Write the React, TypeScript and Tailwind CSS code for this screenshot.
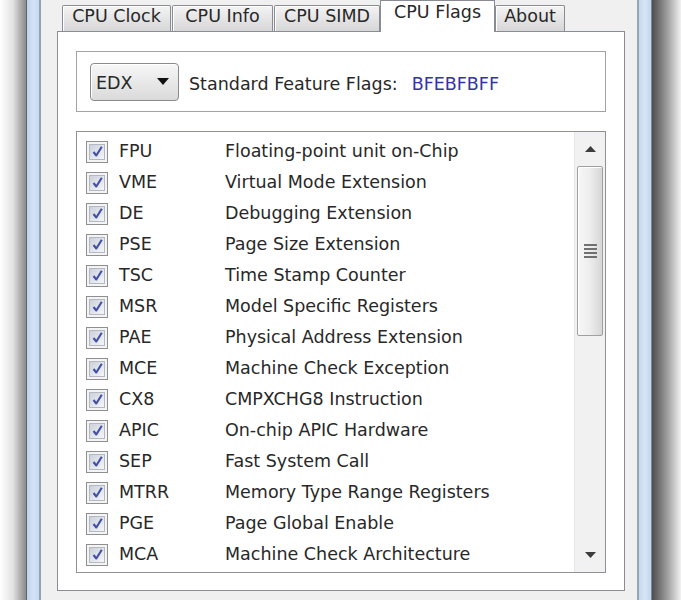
import { useState } from "react";

const flags = [
  { id: "FPU", desc: "Floating-point unit on-Chip" },
  { id: "VME", desc: "Virtual Mode Extension" },
  { id: "DE", desc: "Debugging Extension" },
  { id: "PSE", desc: "Page Size Extension" },
  { id: "TSC", desc: "Time Stamp Counter" },
  { id: "MSR", desc: "Model Specific Registers" },
  { id: "PAE", desc: "Physical Address Extension" },
  { id: "MCE", desc: "Machine Check Exception" },
  { id: "CX8", desc: "CMPXCHG8 Instruction" },
  { id: "APIC", desc: "On-chip APIC Hardware" },
  { id: "SEP", desc: "Fast System Call" },
  { id: "MTRR", desc: "Memory Type Range Registers" },
  { id: "PGE", desc: "Page Global Enable" },
  { id: "MCA", desc: "Machine Check Architecture" },
];

const tabs = [
  { id: "clock", label: "CPU Clock", w: "w-[109px]" },
  { id: "info", label: "CPU Info", w: "w-[101px] ml-[1px]" },
  { id: "simd", label: "CPU SIMD", w: "w-[106px] ml-[1px]" },
  { id: "flags", label: "CPU Flags", w: "w-[115px]" },
  { id: "about", label: "About", w: "w-[70px]" },
];

function CheckBox() {
  return (
    <div className="h-[22px] w-[22px] shrink-0 border border-[#8f8f8f] bg-[#f4f4f4] p-[2px]">
      <div className="flex h-full w-full items-center justify-center border border-[#b3b8c2] bg-gradient-to-br from-[#cdd1da] to-[#f5f6f9]">
        <svg width="13" height="13" viewBox="0 0 13 13">
          <path
            d="M2.5 7 L5.3 10.5 L10.8 1.8"
            fill="none"
            stroke="#3f50a6"
            strokeWidth="2.1"
            strokeLinejoin="round"
          />
        </svg>
      </div>
    </div>
  );
}

function ScrollBar() {
  return (
    <div className="flex w-[31px] shrink-0 flex-col border-l border-[#e8e8e8] bg-[#f1f1f1]">
      <div className="flex h-[34px] items-center justify-center">
        <svg width="11" height="6" viewBox="0 0 11 6">
          <polygon points="0,6 5.5,0 11,6" fill="#3d3d3d" />
        </svg>
      </div>
      <div className="mx-[2px] flex h-[170px] items-center justify-center rounded-[2px] border border-[#a0a0a0] bg-gradient-to-r from-[#f7f7f7] via-[#ededed] to-[#d6d6d6] shadow-[inset_1px_1px_0_#fff]">
        <div className="flex w-[13px] flex-col gap-[2px]">
          <div className="h-[2px] bg-[#707070]" />
          <div className="h-[2px] bg-[#707070]" />
          <div className="h-[2px] bg-[#707070]" />
          <div className="h-[2px] bg-[#707070]" />
        </div>
      </div>
      <div className="flex-1" />
      <div className="flex h-[34px] items-center justify-center">
        <svg width="11" height="6" viewBox="0 0 11 6">
          <polygon points="0,0 11,0 5.5,6" fill="#3d3d3d" />
        </svg>
      </div>
    </div>
  );
}

export default function App() {
  const [active, setActive] = useState("flags");

  return (
    <div className="flex h-[600px] w-[681px] overflow-hidden bg-white font-['DejaVu_Sans','Liberation_Sans',sans-serif] text-[17.5px] text-[#282828]">
      <div className="w-[26px] bg-gradient-to-r from-white via-[#e2e2e2] to-[#8a8a8a]" />
      <div className="w-[1px] bg-[#5d6570]" />
      <div className="w-[12px] bg-gradient-to-r from-[#bcd2ea] via-[#d3e3f5] to-[#c6d9ef]" />
      <div className="w-[2px] bg-[#97a3b1]" />

      <div className="flex w-[596px] flex-col bg-[#f0f0f0] pl-[16px] pr-[12px]">
        <div className="flex h-[31px] items-end pl-[5px]">
          {tabs.map((tab) =>
            tab.id === active ? (
              <div
                key={tab.id}
                className={`relative z-10 -mb-px h-[32px] ${tab.w} border border-b-0 border-[#898c95] bg-white pt-[1px] text-center leading-[20px]`}
              >
                {tab.label}
              </div>
            ) : (
              <button
                key={tab.id}
                onClick={() => setActive(tab.id)}
                className={`h-[26px] ${tab.w} rounded-t-[2px] border border-b-0 border-[#898c95] bg-gradient-to-b from-[#f4f4f4] to-[#d6d6d6] pb-[6px] text-center leading-[20px] shadow-[inset_1px_1px_0_#fff]`}
              >
                {tab.label}
              </button>
            )
          )}
        </div>

        <div className="h-[560px] border border-[#898c95] bg-white px-[18px] pt-[19px]">
          <div className="flex h-[61px] items-center border border-[#a3a3a3] bg-white pl-[13px]">
            <div className="flex h-[38px] w-[89px] items-center justify-between rounded-[4px] border border-[#8a8a8a] bg-gradient-to-b from-[#f7f7f7] to-[#dadada] pl-[5px] pr-[9px] shadow-[inset_1px_1px_0_#fff]">
              <span className="pt-[3px]">EDX</span>
              <svg width="12" height="7" viewBox="0 0 12 7">
                <polygon points="0,0 12,0 6,7" fill="#111" />
              </svg>
            </div>
            <span className="ml-[10px] pt-[5px]">Standard Feature Flags:</span>
            <span className="ml-[14px] pt-[5px] text-[#3434a4]">BFEBFBFF</span>
          </div>

          <div className="mt-[19px] flex h-[442px] border border-[#8d9097] bg-white">
            <div className="flex-1 overflow-hidden pl-[9px] pt-[4px]">
              {flags.map((f) => (
                <div key={f.id} className="flex h-[31px] items-center">
                  <CheckBox />
                  <span className="ml-[11px] w-[106px]">{f.id}</span>
                  <span>{f.desc}</span>
                </div>
              ))}
            </div>
            <ScrollBar />
          </div>
        </div>
      </div>

      <div className="w-[2px] bg-[#9aa5b2]" />
      <div className="w-[12px] bg-gradient-to-r from-[#c6d9ef] via-[#d6e5f6] to-[#c2d6ee]" />
      <div className="w-[1px] bg-[#7d8896]" />
      <div className="flex-1 bg-gradient-to-r from-[#4e4e4e] via-[#9a9a9a] to-[#f2f2f2]" />
    </div>
  );
}
